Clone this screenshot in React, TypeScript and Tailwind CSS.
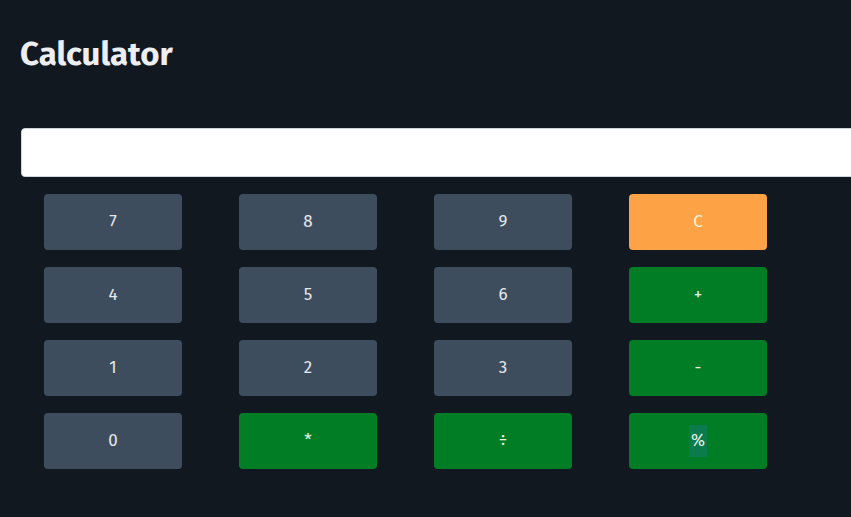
const rows = [
  [
    { label: "7", kind: "num" },
    { label: "8", kind: "num" },
    { label: "9", kind: "num" },
    { label: "C", kind: "clear" },
  ],
  [
    { label: "4", kind: "num" },
    { label: "5", kind: "num" },
    { label: "6", kind: "num" },
    { label: "+", kind: "op" },
  ],
  [
    { label: "1", kind: "num" },
    { label: "2", kind: "num" },
    { label: "3", kind: "num" },
    { label: "-", kind: "op" },
  ],
  [
    { label: "0", kind: "num" },
    { label: "*", kind: "op" },
    { label: "÷", kind: "op" },
    { label: "%", kind: "op" },
  ],
];

const kindClass: Record<string, string> = {
  num: "bg-[#3e4d5e] text-[#e5e7eb]",
  clear: "bg-[#fea345] text-[#fff3df]",
  op: "bg-[#017d25] text-[#e6f2e8]",
};

const App = () => {
  return (
    <div
      className="w-screen h-[517px] overflow-hidden bg-[#111820]"
      style={{ fontFamily: '"Fira Sans", "Open Sans", "Noto Sans", sans-serif' }}
    >
      <h1 className="pl-5 pt-[34px] text-[33px] leading-10 font-bold text-[#eceef2]">Calculator</h1>

      <input
        type="text"
        readOnly
        className="mt-[54px] ml-[21px] block w-[900px] h-[49px] rounded-[4px] bg-white border border-gray-300 outline-none"
      />

      <div className="pl-[44px] pt-[17px] flex flex-col gap-[17px]">
        {rows.map((row, i) => (
          <div key={i} className="flex gap-[57px]">
            {row.map((b) => (
              <button
                key={b.label}
                className={`w-[138px] h-[56px] rounded-[4px] text-[17px] flex items-center justify-center ${kindClass[b.kind]}`}
              >
                {b.label === "%" ? (
                  <span className="bg-[#0b7a4c] px-[2px] leading-8">%</span>
                ) : (
                  b.label
                )}
              </button>
            ))}
          </div>
        ))}
      </div>
    </div>
  );
};

export default App;
